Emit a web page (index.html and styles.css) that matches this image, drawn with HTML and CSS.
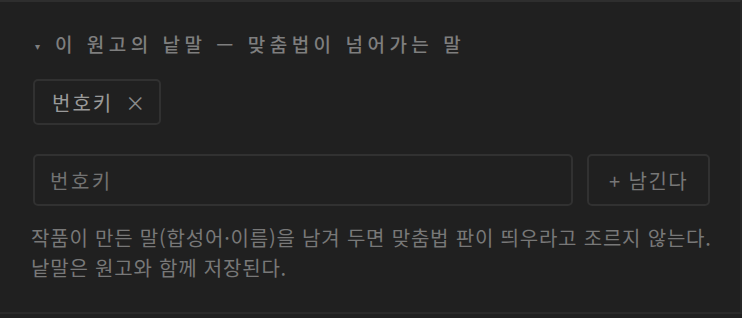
FILE: index.html
```html
<!DOCTYPE html>
<html lang="ko">
<head>
  <meta charset="UTF-8">
  <meta name="viewport" content="width=device-width, initial-scale=1.0">
  <title>원고의 낱말</title>
  <link rel="stylesheet" href="styles.css">
</head>
<body>
  <section class="panel">
    <h2 class="panel-title"><span class="caret">▾</span>이 원고의 낱말 — 맞춤법이 넘어가는 말</h2>

    <div class="chips">
      <span class="chip">번호키<button class="chip-remove" title="지우기">×</button></span>
    </div>

    <div class="add-row">
      <input class="word-input" type="text" placeholder="번호키">
      <button class="add-btn">+ 남긴다</button>
    </div>

    <p class="hint">작품이 만든 말(합성어·이름)을 남겨 두면 맞춤법 판이 띄우라고 조르지 않는다.<br>낱말은 원고와 함께 저장된다.</p>
  </section>
</body>
</html>
```

FILE: styles.css
```css
html, body {
  margin: 0;
  padding: 0;
  background: #202020;
}
body {
  font-family: "Noto Sans CJK KR", "Noto Sans", sans-serif;
  color: #808080;
}
.panel {
  height: 314px;
  box-sizing: border-box;
  border-top: 2px solid #2e2e2e;
  border-bottom: 2px solid #2a2a2a;
  border-right: 2px solid #262626;
  padding: 28px 30px 0 33px;
}
.panel-title {
  margin: 0;
  font-size: 19px;
  font-weight: 500;
  letter-spacing: 4.5px;
  color: #7e7e7e;
  line-height: 28px;
}
.caret {
  font-size: 10px;
  margin-right: 15px;
  margin-left: 2px;
  vertical-align: 2px;
  letter-spacing: 0;
}
.chips {
  margin-top: 19px;
  display: flex;
}
.chip {
  display: inline-flex;
  align-items: center;
  height: 46px;
  box-sizing: border-box;
  padding: 0 14px 0 17px;
  border: 2px solid #313131;
  border-radius: 5px;
  font-size: 20px;
  letter-spacing: 2px;
  color: #9a9a9a;
}
.chip-remove {
  background: none;
  border: none;
  color: #8a8a8a;
  font-size: 20px;
  padding: 0 0 0 12px;
  font-family: inherit;
  cursor: pointer;
}
.add-row {
  display: flex;
  gap: 14px;
  margin-top: 29px;
}
.word-input {
  width: 541px;
  height: 52px;
  box-sizing: border-box;
  background: transparent;
  border: 2px solid #313131;
  border-radius: 5px;
  padding: 0 15px;
  font-family: inherit;
  font-size: 20px;
  letter-spacing: 2.5px;
  color: #9a9a9a;
  outline: none;
}
.word-input::placeholder {
  color: #727272;
}
.add-btn {
  width: 123px;
  height: 52px;
  background: transparent;
  border: 2px solid #313131;
  border-radius: 5px;
  font-family: inherit;
  font-size: 20px;
  letter-spacing: 1.5px;
  color: #777;
  cursor: pointer;
}
.hint {
  margin: 17px -30px 0 -2px;
  font-size: 20px;
  line-height: 30px;
  letter-spacing: 0.8px;
  white-space: nowrap;
  color: #787878;
}
```
